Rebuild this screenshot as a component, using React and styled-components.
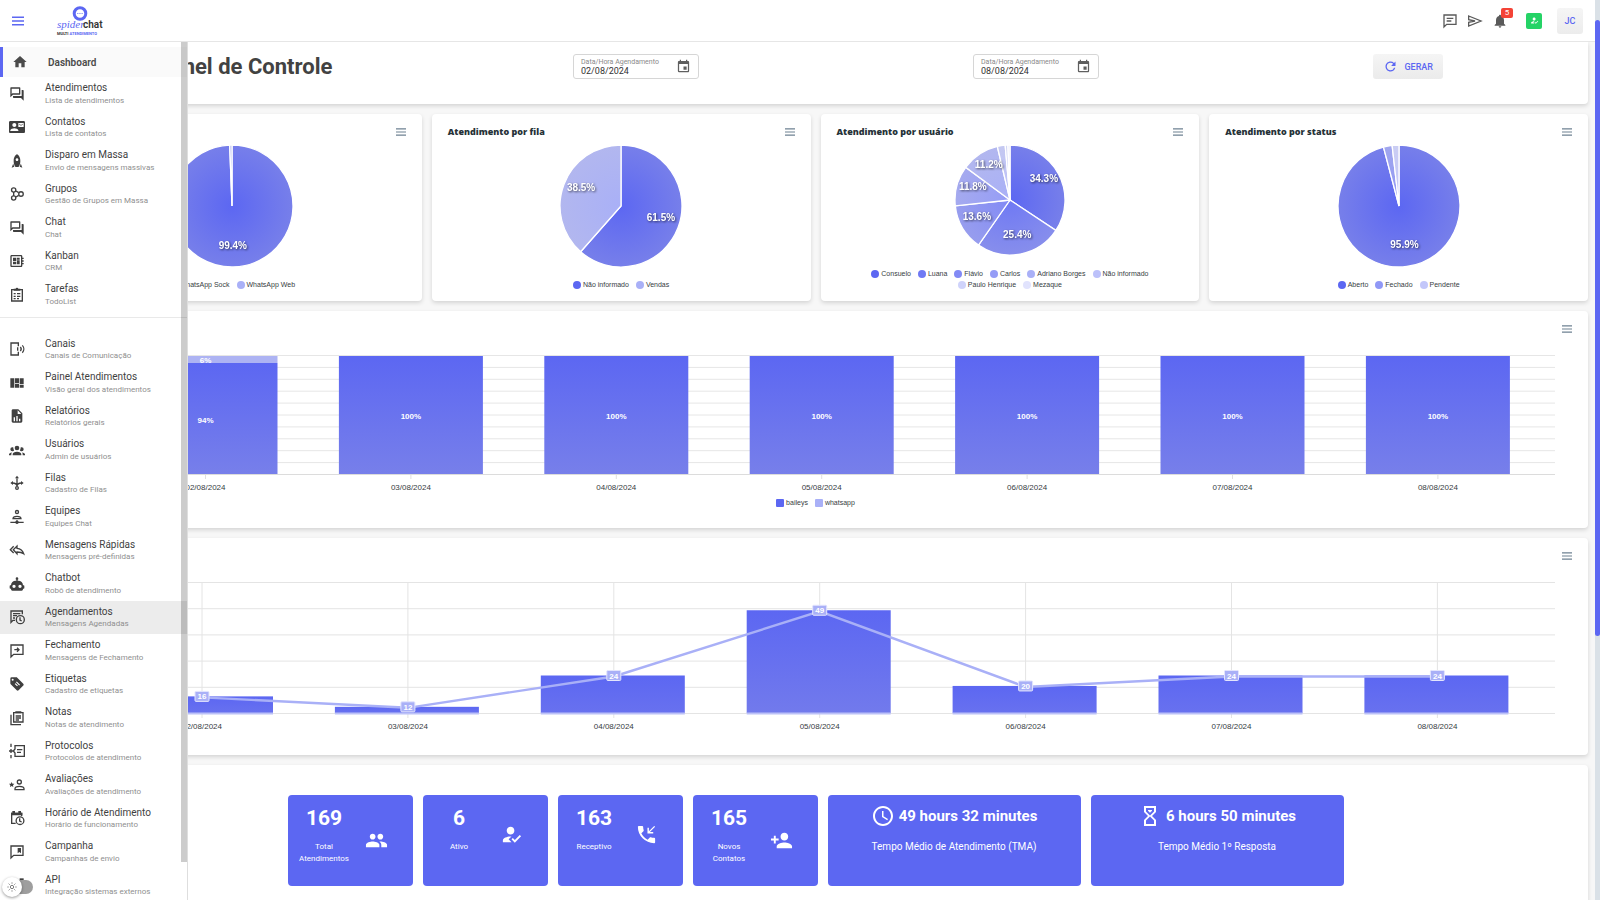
import React from 'react';
import styled, { createGlobalStyle } from 'styled-components';
import {
    MdContactMail,
    MdDeveloperBoard,
    MdEvent,
    MdGroup,
    MdHowToReg,
    MdNotifications,
    MdPersonAdd,
    MdRefresh,
    MdSchedule
} from 'react-icons/md';

const PRIMARY = '#5c67f2';
const ARIAL = '"Liberation Sans", Arial, sans-serif';

const GlobalStyle = createGlobalStyle`
    * {
        box-sizing: border-box;
    }
    body {
        margin: 0;
        background: #f7f7f7;
        color: #424242;
        font-family: Roboto, sans-serif;
        overflow: hidden;
    }
    button, input {
        font-family: inherit;
    }
`
const Page = styled.div`
    display: flex;
    height: 100vh;
`
const Column = styled.div`
    flex: 1;
    min-width: 0;
    display: flex;
    flex-direction: column;
`
const PageTrack = styled.div`
    width: 5px;
    padding-top: 20px;
    background: #dae1e7;
`
const PageThumb = styled.div`
    height: 70%;
    border-radius: 3px;
    background: ${PRIMARY};
`

/* top bar */
const Header = styled.header`
    height: 42px;
    flex-shrink: 0;
    display: flex;
    align-items: center;
    padding: 0 12px;
    background: #fff;
    border-bottom: 1px solid #e6e6e6;
`
const IconButton = styled.button`
    display: flex;
    padding: 0;
    border: 0;
    background: none;
    color: #5a5a5a;
    cursor: pointer;
`
const Brand = styled.a`
    display: flex;
    margin-left: 32px;
`
const Actions = styled.div`
    margin-left: auto;
    display: flex;
    align-items: center;
`
const ActionGroup = styled.div`
    display: flex;
    gap: 9px;
    margin-right: 18px;
`
const BellButton = styled(IconButton)`
    position: relative;
`
const Badge = styled.span`
    position: absolute;
    top: -5px;
    left: 9px;
    width: 12px;
    border-radius: 2px;
    background: #f44336;
    color: #fff;
    font-size: 8px;
    line-height: 10px;
    text-align: center;
`
const StatusButton = styled.button`
    display: flex;
    align-items: center;
    justify-content: center;
    width: 16px;
    height: 16px;
    margin-right: 15px;
    padding: 0;
    border: 0;
    border-radius: 2px;
    background: #25d366;
    color: #fff;
`
const Avatar = styled.button`
    width: 26px;
    height: 26px;
    padding: 0;
    border: 0;
    border-radius: 3px;
    background: linear-gradient(#f5f5f5, #ececec);
    color: ${PRIMARY};
    font-size: 9px;
    font-weight: 500;
`

/* side menu */
const Body = styled.div`
    position: relative;
    flex: 1;
    min-height: 0;
    overflow: hidden;
`
const Sidebar = styled.aside`
    position: absolute;
    top: 0;
    bottom: 0;
    left: 0;
    width: 188px;
    padding-top: 5px;
    overflow: hidden;
    background: #fff;
    border-right: 1px solid #dedede;
`
const SidebarThumb = styled.div`
    position: absolute;
    top: 0;
    right: 0;
    width: 6px;
    height: 820px;
    background: rgba(0, 0, 0, 0.2);
`
const HomeItem = styled.a`
    display: flex;
    align-items: center;
    height: 30px;
    padding-left: 9px;
    gap: 20px;
    border-left: 3px solid ${PRIMARY};
    background: #fafafa;
    color: #4a4a4a;
    font-size: 10px;
    font-weight: 600;
    text-decoration: none;
`
const MenuGroup = styled.nav`
    & + & {
        margin-top: 5px;
        padding-top: 15px;
        border-top: 1px solid #e9e9e9;
    }
`
const MenuItem = styled.a`
    display: flex;
    align-items: center;
    gap: 20px;
    padding: 0 9px;
    background: ${({ $active }) => ($active ? '#ececec' : 'none')};
    color: #3f3f3f;
    text-decoration: none;
`
const MenuText = styled.span`
    padding: 3px 0 7px;
    white-space: nowrap;
`
const MenuLabel = styled.span`
    display: block;
    font-size: 10px;
    line-height: 1.65;
`
const MenuCaption = styled.span`
    display: block;
    color: #8f8f8f;
    font-size: 8px;
    line-height: 7px;
`
const ThemeSwitch = styled.label`
    position: absolute;
    left: 2px;
    bottom: 3px;
    display: flex;
    align-items: center;
    input {
        position: absolute;
        opacity: 0;
    }
`
const SwitchTrack = styled.span`
    width: 21px;
    height: 14px;
    margin-left: -10px;
    border-radius: 7px;
    background: #9e9e9e;
`
const SwitchThumb = styled.span`
    z-index: 1;
    display: flex;
    align-items: center;
    justify-content: center;
    width: 20px;
    height: 20px;
    border-radius: 50%;
    background: #fff;
    box-shadow: 0 1px 3px rgba(0, 0, 0, 0.4);
`

/* content */
const Main = styled.main`
    display: flex;
    flex-direction: column;
    gap: 10px;
    height: 100%;
    padding: 0 7px 0 43px;
`
const Card = styled.section`
    background: #fff;
    border-radius: 4px;
    box-shadow: 0 2px 4px rgba(0, 0, 0, 0.14);
`
const FilterCard = styled(Card)`
    display: grid;
    grid-template-columns: 422fr 400fr 400fr 70px;
    align-items: start;
    flex-shrink: 0;
    height: 62px;
    padding: 12px 145px 0 108px;
    border-radius: 0 0 4px 4px;
`
const Title = styled.h1`
    margin: 0;
    font-size: 22px;
    line-height: 25px;
    font-weight: 700;
    white-space: nowrap;
`
const Field = styled.div`
    display: flex;
    align-items: center;
    justify-content: space-between;
    width: 126px;
    height: 25px;
    padding: 0 7px;
    border: 1px solid #d6d6d6;
    border-radius: 3px;
    color: #5f5f5f;
`
const FieldLabel = styled.label`
    display: block;
    color: #8a8a8a;
    font-size: 7px;
    line-height: 8px;
    white-space: nowrap;
`
const FieldInput = styled.input`
    display: block;
    width: 80px;
    height: 10px;
    padding: 0;
    border: 0;
    outline: 0;
    background: none;
    color: #333;
    font-size: 9px;
`
const GenerateButton = styled.button`
    display: flex;
    align-items: center;
    justify-content: space-between;
    height: 25px;
    padding: 0 10px;
    border: 0;
    border-radius: 3px;
    background: linear-gradient(#f5f5f5, #ebebeb);
    color: ${PRIMARY};
    font-size: 9px;
    font-weight: 500;
`
const PieRow = styled.div`
    display: grid;
    grid-template-columns: repeat(4, 1fr);
    gap: 10px;
`
const PieCard = styled(Card)`
    display: flex;
    flex-direction: column;
    align-items: center;
    height: 187px;
    padding: 8px 16px 11px;
`
const CardHead = styled.div`
    display: flex;
    align-items: center;
    align-self: stretch;
    height: 19px;
    margin-bottom: 3px;
    ${IconButton} {
        margin-left: auto;
    }
`
const CardTitle = styled.h2`
    margin: 0;
    color: #263238;
    font-family: "Open Sans", sans-serif;
    font-size: 9px;
    font-weight: 800;
`
const Legend = styled.ul`
    display: flex;
    flex-wrap: wrap;
    justify-content: center;
    column-gap: 7px;
    margin: auto 0 0;
    padding: 0 24px;
    list-style: none;
`
const LegendItem = styled.li`
    display: flex;
    align-items: center;
    gap: 2px;
    color: #373d3f;
    font-family: ${ARIAL};
    font-size: 7px;
    line-height: 11px;
    white-space: nowrap;
    &::before {
        content: '';
        width: 8px;
        height: 8px;
        border-radius: ${({ $square }) => ($square ? '1px' : '50%')};
        background: ${({ $color }) => $color};
    }
`
const PieLabel = styled.text`
    fill: #fff;
    font: bold 10px ${ARIAL};
    text-anchor: middle;
    filter: drop-shadow(1px 1px 1px rgba(0, 0, 0, 0.6));
`
const ChartCard = styled(Card)`
    display: flex;
    flex-direction: column;
    flex-shrink: 0;
    height: 217px;
    padding: 8px 0 20px;
`
const ChartHead = styled(CardHead)`
    padding-right: 16px;
    margin: 0 0 13px;
`
const ChartSvg = styled.svg`
    display: block;
    width: 100%;
    height: ${({ $height }) => $height}px;
    font-family: ${ARIAL};
    text-anchor: middle;
`
const AxisText = styled.text`
    fill: #373d3f;
    font-size: 8px;
`
const BarText = styled.text`
    fill: #fff;
    font-size: 8px;
    font-weight: bold;
`
const StatsCard = styled(Card)`
    display: flex;
    align-items: flex-start;
    justify-content: center;
    gap: 10px;
    flex: 1;
    min-height: 160px;
    padding-top: 30px;
`
const Stat = styled.div`
    display: flex;
    align-items: flex-start;
    width: 125px;
    height: 91px;
    padding-top: 9px;
    border-radius: 4px;
    background: ${PRIMARY};
    color: #fff;
`
const StatRow = styled.div`
    display: flex;
    align-items: center;
    gap: 4px;
    width: 100%;
`
const StatText = styled.div`
    width: 73px;
    padding-bottom: 11px;
    text-align: center;
`
const StatValue = styled.div`
    margin-bottom: 9px;
    font-size: 21px;
    line-height: 28px;
    font-weight: 700;
`
const StatLabel = styled.div`
    padding: 0 10px;
    font-size: 8px;
    line-height: 12px;
`
const TimeStat = styled.div`
    width: 253px;
    height: 91px;
    padding-top: 9px;
    border-radius: 4px;
    background: ${PRIMARY};
    color: #fff;
    text-align: center;
`
const TimeValue = styled.div`
    display: flex;
    align-items: center;
    justify-content: center;
    gap: 4px;
    height: 24px;
    font-size: 15px;
    font-weight: 700;
`
const TimeLabel = styled.div`
    margin-top: 12px;
    font-size: 10px;
    line-height: 14px;
`

// filled 24x24 icons
const Glyph = ({ d, size = 16 }) => (
    <svg width={size} height={size} viewBox='0 0 24 24' fill='currentColor'>
        <path fillRule='evenodd' d={d} />
    </svg>
)
// line 24x24 icons
const Line = ({ d, size = 16, children }) => (
    <svg width={size} height={size} viewBox='0 0 24 24' fill='none' stroke='currentColor' strokeWidth='2'>
        <path d={d} />
        {children}
    </svg>
)
const Burger = ({ width = 10, color = '#6e8192' }) => (
    <svg width={width} height={width} viewBox='0 0 12 12' stroke={color} strokeWidth='1.4'>
        <path d='M0 2.2H12M0 6H12M0 9.8H12' />
    </svg>
)
const IncomingCall = ({ size }) => (
    <Glyph size={size} d='M4,3A1,1 0 0,0 3,4A17,17 0 0,0 20,21A1,1 0 0,0 21,20V16.5A1,1 0 0,0 20,15.5C18.75,15.5 17.55,15.3 16.43,14.93C16.08,14.82 15.69,14.9 15.41,15.18L13.21,17.38C10.38,15.94 8.06,13.62 6.62,10.79L8.82,8.59C9.1,8.31 9.18,7.92 9.07,7.57C8.7,6.45 8.5,5.25 8.5,4A1,1 0 0,0 7.5,3H4M19,11V9.5H15.5L21,4L20,3L14.5,8.5V5H13V11H19Z' />
)

const BUBBLE = 'M3 21V3H21V17H7Z'
const icons = {
    home: <Glyph d='M10,20V14H14V20H19V12H22L12,3L2,12H5V20H10Z' />,
    forum: <Glyph d='M15,4V11H5.17L4,12.17V4H15M16,2H3A1,1 0 0,0 2,3V17L6,13H16A1,1 0 0,0 17,12V3A1,1 0 0,0 16,2M21,6H19V15H6V17A1,1 0 0,0 7,18H18L22,22V7A1,1 0 0,0 21,6Z' />,
    contact: <MdContactMail size={16} />,
    rocket: <Glyph d='M20,22L16.14,20.45C16.84,18.92 17.34,17.34 17.65,15.73L20,22M7.86,20.45L4,22L6.35,15.73C6.66,17.34 7.16,18.92 7.86,20.45M12,2C12,2 17,4 17,12C17,15.1 16.25,17.75 15.33,19.83C15,20.55 14.29,21 13.5,21H10.5C9.71,21 9,20.55 8.67,19.83C7.75,17.75 7,15.1 7,12C7,4 12,2 12,2M12,12C13.1,12 14,11.1 14,10C14,8.9 13.1,8 12,8C10.9,8 10,8.9 10,10C10,11.1 10.9,12 12,12Z' />,
    groups: (
        <Line d='M7 9V15M10.500 7.500L14.500 10M10.500 16.500L14.500 14'>
            <circle cx='7' cy='6' r='3.200' />
            <circle cx='7' cy='18' r='3.200' />
            <circle cx='18' cy='12' r='3.400' />
        </Line>
    ),
    board: <MdDeveloperBoard size={16} />,
    todo: (
        <Line d='M4 4H20V21H4ZM7 10H10M12 10H17M7 14H10M12 14H17M7 17.500H10M12 17.500H15'>
            <path d='M8.500 5.500V4H15.500V5.500' strokeWidth='3' />
            <circle cx='12' cy='3' r='1' />
        </Line>
    ),
    phone: <Line d='M14 8V3H3V21H14V16M13 9.500V14.500M17 9A4.500 4.500 0 0 1 17 15M20 6.500A8 8 0 0 1 20 17.500' />,
    panel: <Glyph d='M2,5H8V19H2ZM9,5H15V12H9ZM9,13H15V19H9ZM16,5H22V14H16ZM16,15H22V19H16Z' />,
    report: <Glyph d='M13,9H18.5L13,3.5V9M6,2H14L20,8V20A2,2 0 0,1 18,22H6C4.89,22 4,21.1 4,20V4C4,2.89 4.89,2 6,2M7,20H9V14H7V20M11,20H13V12H11V20M15,20H17V16H15V20Z' />,
    users: <Glyph d='M12,5.5A3.5,3.5 0 0,1 15.5,9A3.5,3.5 0 0,1 12,12.5A3.5,3.5 0 0,1 8.5,9A3.5,3.5 0 0,1 12,5.5M5,8C5.56,8 6.08,8.15 6.53,8.42C6.38,9.85 6.8,11.27 7.66,12.38C7.16,13.34 6.16,14 5,14A3,3 0 0,1 2,11A3,3 0 0,1 5,8M19,8A3,3 0 0,1 22,11A3,3 0 0,1 19,14C17.84,14 16.84,13.34 16.34,12.38C17.2,11.27 17.62,9.85 17.47,8.42C17.92,8.15 18.44,8 19,8M5.5,18.25C5.5,16.18 8.41,14.5 12,14.5C15.59,14.5 18.5,16.18 18.5,18.25V20H5.5V18.25M0,20V18.5C0,17.11 1.89,15.94 4.45,15.6C3.86,16.28 3.5,17.22 3.5,18.25V20H0M24,20H20.5V18.25C20.5,17.22 20.14,16.28 19.55,15.6C22.11,15.94 24,17.11 24,18.5V20Z' />,
    queues: (
        <Line d='M12 17V5M12 17C12 14 9 12 5 12M12 17C12 14 15 12 19 12'>
            <path d='M12 1L15 5H9ZM2 12L6 9V15ZM22 12L18 9V15Z' fill='currentColor' stroke='none' />
            <circle cx='12' cy='19.500' r='2' />
        </Line>
    ),
    team: (
        <Line d='M2 20H22M12 17V20'>
            <circle cx='12' cy='4.500' r='2.300' />
            <path d='M6 14.500C6 12 9 11 12 11S18 12 18 14.500Z' />
            <circle cx='12' cy='20' r='1.600' fill='currentColor' />
        </Line>
    ),
    reply: <Line d='M7 6.500L2 11.500L7 16.500M12 15V17.500L6.500 11.500L12 6V9.500C17 10 20.500 12.500 22 17.500C19.500 15.500 17 15 12 15Z' />,
    robot: <Glyph d='M12,2A2,2 0 0,1 14,4C14,4.74 13.6,5.39 13,5.73V7H14A7,7 0 0,1 21,14H22A1,1 0 0,1 23,15V18A1,1 0 0,1 22,19H21V20A2,2 0 0,1 19,22H5A2,2 0 0,1 3,20V19H2A1,1 0 0,1 1,18V15A1,1 0 0,1 2,14H3A7,7 0 0,1 10,7H11V5.73C10.4,5.39 10,4.74 10,4A2,2 0 0,1 12,2M7.5,13A2.5,2.5 0 0,0 5,15.5A2.5,2.5 0 0,0 7.5,18A2.5,2.5 0 0,0 10,15.5A2.5,2.5 0 0,0 7.5,13M16.5,13A2.5,2.5 0 0,0 14,15.5A2.5,2.5 0 0,0 16.5,18A2.5,2.5 0 0,0 19,15.5A2.5,2.5 0 0,0 16.5,13Z' />,
    schedule: (
        <Line d='M20 8V3H3V20L6 17H9M6 7H17M6 10H12M6 13.500H9'>
            <circle cx='17' cy='16' r='6' />
            <path d='M16.500 12.500V16.500L19 18' />
        </Line>
    ),
    closing: <Line d={`${BUBBLE}M8 10H15M12 7L15 10L12 13`} />,
    tag: <Glyph d='M5.500,7A1.500,1.500 0 1,0 5.500,4A1.500,1.500 0 1,0 5.500,7M21.400,11.600L12.400,2.600C12,2.200 11.500,2 11,2H4A2,2 0 0,0 2,4V11C2,11.500 2.200,12 2.600,12.400L11.600,21.400C12.400,22.200 13.600,22.200 14.400,21.400L21.400,14.400C22.200,13.600 22.200,12.400 21.400,11.600M10.500,9.500L11.700,8.300L16.500,13.100L15.300,14.300ZM8.600,12L9.800,10.800L13.300,14.300L12.100,15.500Z' />,
    notes: (
        <Line d='M3 7V22H18M7 4H21V18H7ZM10 9H18M10 12H18M10 15H15'>
            <path d='M11 5V3.500H17V5' strokeWidth='3' />
        </Line>
    ),
    protocols: <Line d='M3 1V6M3 9V15M3 18V23M0 12H6M9 4H23V20H9V15L6.500 12L9 9ZM12 10H20M12 14H18' />,
    rating: (
        <Line d='M9 19V17.500C9 15 12 14 15.500 14S22.500 15 22.500 17.500V19Z'>
            <circle cx='15.500' cy='7.500' r='3' />
            <path d='M4 7.500L5.200 10L8 10.300L6 12.200L6.500 15L4 13.600L1.500 15L2 12.200L0 10.300L2.800 10Z' fill='currentColor' stroke='none' />
        </Line>
    ),
    hours: (
        <Line d='M10 20H4V5H19V9'>
            <path d='M3 6H20M7 1.500V5M16 1.500V5' strokeWidth='4' />
            <circle cx='16.500' cy='16' r='5.800' />
            <path d='M16 12.500V16.500L19 18' />
        </Line>
    ),
    campaign: (
        <Line d={BUBBLE}>
            <path d='M13 6H18V14L15.500 12L13 14Z' fill='currentColor' stroke='none' />
        </Line>
    ),
    api: <Glyph d='M16,2H22V8H16Z' />
}

const mainMenu = [
    ['forum', 'Atendimentos', 'Lista de atendimentos'],
    ['contact', 'Contatos', 'Lista de contatos'],
    ['rocket', 'Disparo em Massa', 'Envio de mensagens massivas'],
    ['groups', 'Grupos', 'Gestão de Grupos em Massa'],
    ['forum', 'Chat', 'Chat'],
    ['board', 'Kanban', 'CRM'],
    ['todo', 'Tarefas', 'TodoList']
]
const adminMenu = [
    ['phone', 'Canais', 'Canais de Comunicação'],
    ['panel', 'Painel Atendimentos', 'Visão geral dos atendimentos'],
    ['report', 'Relatórios', 'Relatórios gerais'],
    ['users', 'Usuários', 'Admin de usuários'],
    ['queues', 'Filas', 'Cadastro de Filas'],
    ['team', 'Equipes', 'Equipes Chat'],
    ['reply', 'Mensagens Rápidas', 'Mensagens pré-definidas'],
    ['robot', 'Chatbot', 'Robô de atendimento'],
    ['schedule', 'Agendamentos', 'Mensagens Agendadas'],
    ['closing', 'Fechamento', 'Mensagens de Fechamento'],
    ['tag', 'Etiquetas', 'Cadastro de etiquetas'],
    ['notes', 'Notas', 'Notas de atendimento'],
    ['protocols', 'Protocolos', 'Protocolos de atendimento'],
    ['rating', 'Avaliações', 'Avaliações de atendimento'],
    ['hours', 'Horário de Atendimento', 'Horário de funcionamento'],
    ['campaign', 'Campanha', 'Campanhas de envio'],
    ['api', 'API', 'Integração sistemas externos']
]

// name, percent, colour, colour at the rim
const pies = [
    {
        id: 'canal',
        radius: 61,
        data: [
            ['WhatsApp Sock', 99.4, '#5c67f2', '#777fea'],
            ['WhatsApp Web', 0.6, '#a9b0f7', '#b2b7ef']
        ]
    },
    {
        id: 'fila',
        title: 'Atendimento por fila',
        radius: 61,
        data: [
            ['Não informado', 61.5, '#5c67f2', '#777fea'],
            ['Vendas', 38.5, '#a9b0f7', '#b2b7ef']
        ]
    },
    {
        id: 'usuario',
        title: 'Atendimento por usuário',
        radius: 55,
        data: [
            ['Consuelo', 34.3, '#5c67f2', '#777fea'],
            ['Luana', 25.4, '#6f79f4', '#878eec'],
            ['Flávio', 13.6, '#828af5', '#979dee'],
            ['Carlos', 11.8, '#959cf6', '#a5aaef'],
            ['Adriano Borges', 11.2, '#a9b0f7', '#b2b7ef'],
            ['Não informado', 2.3, '#bcc1fa', '#c4c8f1'],
            ['Paulo Henrique', 0.8, '#cfd3fb', '#d3d6f5'],
            ['Mezaque', 0.6, '#e1e3fd', '#e4e6f9']
        ]
    },
    {
        id: 'status',
        title: 'Atendimento por status',
        radius: 61,
        data: [
            ['Aberto', 95.9, '#5c67f2', '#777fea'],
            ['Fechado', 2.3, '#9098f6', '#a0a6ee'],
            ['Pendente', 1.8, '#c3c7fa', '#cacdf3']
        ]
    }
]

const days = ['02/08/2024', '03/08/2024', '04/08/2024', '05/08/2024', '06/08/2024', '07/08/2024', '08/08/2024']
const totals = [16, 12, 24, 49, 20, 24, 24]

function Menu({ items }) {
    return (
        <MenuGroup>
            {items.map(([icon, label, caption]) => (
                <MenuItem key={label} href='#' $active={label === 'Agendamentos'}>
                    {icons[icon]}
                    <MenuText>
                        <MenuLabel>{label}</MenuLabel>
                        <MenuCaption>{caption}</MenuCaption>
                    </MenuText>
                </MenuItem>
            ))}
        </MenuGroup>
    )
}

function Pie({ id, radius, data }) {
    const half = radius + 1
    const point = (percent, r) => {
        const angle = (percent / 100) * Math.PI * 2
        return [Math.sin(angle) * r, -Math.cos(angle) * r]
    }
    let start = 0
    const slices = data.map(([name, value, color, rim], idx) => {
        const from = start
        start += value
        return { name, value, color, rim, idx, from, to: start }
    })
    return (
        <svg width={half * 2} height={half * 2} viewBox={`${-half} ${-half} ${half * 2} ${half * 2}`}>
            <defs>
                {slices.map(({ color, rim, idx }) => (
                    <radialGradient key={idx} id={`${id}${idx}`} gradientUnits='userSpaceOnUse' cx='0' cy='0' r={radius}>
                        <stop offset='0' stopColor={color} />
                        <stop offset='1' stopColor={rim} />
                    </radialGradient>
                ))}
            </defs>
            {slices.map(({ value, idx, from, to }) => (
                <path
                    key={idx}
                    d={`M0 0L${point(from, radius)}A${radius} ${radius} 0 ${value > 50 ? 1 : 0} 1 ${point(to, radius)}Z`}
                    fill={`url(#${id}${idx})`}
                    stroke='#fff'
                    strokeWidth='1.300'
                />
            ))}
            {slices.filter(({ value }) => value > 5).map(({ value, idx, from, to }) => {
                const [x, y] = point((from + to) / 2, radius * 0.7)
                return <PieLabel key={idx} x={x} y={y}>{value}%</PieLabel>
            })}
        </svg>
    )
}

function StackedChart() {
    const center = idx => 162.5 + idx * 205.4
    return (
        <ChartSvg viewBox='0 0 1545 146' $height={146}>
            <defs>
                <linearGradient id='stack' x1='0' y1='0' x2='0' y2='1'>
                    <stop offset='0' stopColor='#5c67f2' />
                    <stop offset='1' stopColor='#777fea' />
                </linearGradient>
            </defs>
            {Array.from({ length: 11 }, (_, idx) => (
                <path key={idx} d={`M46 ${4.5 + idx * 11.9}H1512`} stroke={idx === 10 ? '#dcdcdc' : '#e6e6e6'} strokeWidth='1' />
            ))}
            {days.map((day, idx) => {
                const x = center(idx)
                const top = idx === 0 ? 12 : 5
                return (
                    <g key={day}>
                        <path d={`M${x} 124V128`} stroke='#e0e0e0' />
                        {idx === 0 && <rect x={x - 72} y='5' width='144' height='7' fill='#adb3f3' />}
                        <rect x={x - 72} y={top} width='144' height={123 - top} fill='url(#stack)' />
                        {idx === 0 && <BarText x={x} y='12'>6%</BarText>}
                        <BarText x={x} y={idx === 0 ? 72 : 68}>{idx === 0 ? '94%' : '100%'}</BarText>
                        <AxisText x={x} y='139'>{day}</AxisText>
                    </g>
                )
            })}
        </ChartSvg>
    )
}

function TotalsChart() {
    const center = idx => 159 + idx * 205.9
    const top = value => 97.5 - (value - 24) * 2.61
    return (
        <ChartSvg viewBox='0 0 1545 154' $height={154}>
            <defs>
                <linearGradient id='totals' gradientUnits='userSpaceOnUse' x1='0' y1='32' x2='0' y2='136'>
                    <stop offset='0' stopColor='#5c67f2' />
                    <stop offset='1' stopColor='#727aec' />
                </linearGradient>
                <linearGradient id='totalsLow' x1='0' y1='0' x2='0' y2='1'>
                    <stop offset='0' stopColor='#5c67f2' />
                    <stop offset='1' stopColor='#6871ef' />
                </linearGradient>
            </defs>
            {[0, 1, 2, 3, 4, 5].map(idx => (
                <path key={idx} d={`M46 ${4.5 + idx * 26.2}H1512`} stroke='#e4e4e4' />
            ))}
            {days.map((day, idx) => (
                <g key={day}>
                    <path d={`M${center(idx)} 5V140`} stroke='#e4e4e4' />
                    <rect
                        x={center(idx) - 73}
                        y={top(totals[idx])}
                        width='144'
                        height={135 - top(totals[idx])}
                        fill={totals[idx] > 40 ? 'url(#totals)' : 'url(#totalsLow)'}
                    />
                    <path d={`M${center(idx) - 73} 135.500H${center(idx) + 71}`} stroke='#bcc1f7' strokeWidth='2' />
                    <AxisText x={center(idx)} y='151'>{day}</AxisText>
                </g>
            ))}
            <polyline
                points={totals.map((value, idx) => `${center(idx)},${top(value) + 1}`).join(' ')}
                fill='none'
                stroke='#a9b0f7'
                strokeWidth='2.400'
            />
            {totals.map((value, idx) => (
                <g key={idx}>
                    <rect x={center(idx) - 7} y={top(value) - 5} width='14' height='10' rx='1' fill='#a9b0f7' stroke='#e3e5fd' />
                    <BarText x={center(idx)} y={top(value) + 3}>{value}</BarText>
                </g>
            ))}
        </ChartSvg>
    )
}

function DateField({ id, value }) {
    return (
        <Field>
            <div>
                <FieldLabel htmlFor={id}>Data/Hora Agendamento</FieldLabel>
                <FieldInput id={id} defaultValue={value} />
            </div>
            <MdEvent size={15} />
        </Field>
    )
}

function Logo() {
    return (
        <svg width='48' height='32' viewBox='0 0 48 32'>
            <circle cx='24' cy='8.500' r='5.800' fill='none' stroke={PRIMARY} strokeWidth='3' />
            <path d='M21 8.500H27' stroke='#9aa1f7' strokeWidth='1' strokeDasharray='1.500 .7' />
            <text x='1' y='23' fill={PRIMARY} fontFamily='Liberation Serif, serif' fontStyle='italic' fontSize='11'>spider</text>
            <text x='27' y='23' fill='#333' fontFamily='Roboto, sans-serif' fontWeight='600' fontSize='10'>chat</text>
            <text x='1' y='30' fill='#333' fontFamily='Roboto, sans-serif' fontWeight='700' fontSize='4'>
                MULTI <tspan fill={PRIMARY}>ATENDIMENTO</tspan>
            </text>
        </svg>
    )
}

function StatBox({ value, label, icon: IconComponent }) {
    return (
        <Stat>
            <StatRow>
                <StatText>
                    <StatValue>{value}</StatValue>
                    <StatLabel>{label}</StatLabel>
                </StatText>
                <IconComponent size={23} />
            </StatRow>
        </Stat>
    )
}

function App() {
    return (
        <Page>
            <GlobalStyle />
            <Column>
                <Header>
                    <IconButton aria-label='Menu'>
                        <Burger width={12} color={PRIMARY} />
                    </IconButton>
                    <Brand href='#' aria-label='spiderchat'>
                        <Logo />
                    </Brand>
                    <Actions>
                        <ActionGroup>
                            <IconButton aria-label='Mensagens'>
                                <Line d={`${BUBBLE}M7 8H17M7 12H14`} />
                            </IconButton>
                            <IconButton aria-label='Enviar'>
                                <Line d='M2.500 4.500L21 12L2.500 19.500V14L12 12L2.500 10Z' />
                            </IconButton>
                            <BellButton aria-label='Notificações'>
                                <MdNotifications size={16} />
                                <Badge>5</Badge>
                            </BellButton>
                        </ActionGroup>
                        <StatusButton aria-label='Status'>
                            <MdHowToReg size={9} />
                        </StatusButton>
                        <Avatar>JC</Avatar>
                    </Actions>
                </Header>
                <Body>
                    <Main>
                        <FilterCard>
                            <Title>Painel de Controle</Title>
                            <DateField id='start' value='02/08/2024' />
                            <DateField id='end' value='08/08/2024' />
                            <GenerateButton>
                                <MdRefresh size={15} />
                                GERAR
                            </GenerateButton>
                        </FilterCard>
                        <PieRow>
                            {pies.map(pie => (
                                <PieCard key={pie.id}>
                                    <CardHead>
                                        {pie.title && <CardTitle>{pie.title}</CardTitle>}
                                        <IconButton aria-label='Opções'><Burger /></IconButton>
                                    </CardHead>
                                    <Pie {...pie} />
                                    <Legend>
                                        {pie.data.map(([name, , color]) => (
                                            <LegendItem key={name} $color={color}>{name}</LegendItem>
                                        ))}
                                    </Legend>
                                </PieCard>
                            ))}
                        </PieRow>
                        <ChartCard>
                            <ChartHead>
                                <IconButton aria-label='Opções'><Burger /></IconButton>
                            </ChartHead>
                            <StackedChart />
                            <Legend>
                                <LegendItem $square $color='#5c67f2'>baileys</LegendItem>
                                <LegendItem $square $color='#a9b0f7'>whatsapp</LegendItem>
                            </Legend>
                        </ChartCard>
                        <ChartCard>
                            <ChartHead>
                                <IconButton aria-label='Opções'><Burger /></IconButton>
                            </ChartHead>
                            <TotalsChart />
                        </ChartCard>
                        <StatsCard>
                            <StatBox value='169' label='Total Atendimentos' icon={MdGroup} />
                            <StatBox value='6' label='Ativo' icon={MdHowToReg} />
                            <StatBox value='163' label='Receptivo' icon={IncomingCall} />
                            <StatBox value='165' label='Novos Contatos' icon={MdPersonAdd} />
                            <TimeStat>
                                <TimeValue><MdSchedule size={24} />49 hours 32 minutes</TimeValue>
                                <TimeLabel>Tempo Médio de Atendimento (TMA)</TimeLabel>
                            </TimeStat>
                            <TimeStat>
                                <TimeValue>
                                    <Glyph size={24} d='M6,2H18V8L14,12L18,16V22H6V16L10,12L6,8V2M16,16.5L12,12.5L8,16.5V20H16V16.5M12,11.5L16,7.5V4H8V7.5L12,11.5M10,6H14V6.75L12,8.75L10,6.75V6Z' />
                                    6 hours 50 minutes
                                </TimeValue>
                                <TimeLabel>Tempo Médio 1º Resposta</TimeLabel>
                            </TimeStat>
                        </StatsCard>
                    </Main>
                    <Sidebar>
                        <HomeItem href='#'>
                            {icons.home}
                            Dashboard
                        </HomeItem>
                        <Menu items={mainMenu} />
                        <Menu items={adminMenu} />
                        <SidebarThumb />
                        <ThemeSwitch>
                            <input type='checkbox' aria-label='Tema escuro' />
                            <SwitchThumb>
                                <svg width='10' height='10' viewBox='0 0 24 24' fill='none' stroke='#666' strokeWidth='2'>
                                    <circle cx='12' cy='12' r='4' />
                                    <path d='M12 1V4M12 20V23M1 12H4M20 12H23M4 4L6.500 6.500M17.500 17.500L20 20M4 20L6.500 17.500M17.500 6.500L20 4' />
                                </svg>
                            </SwitchThumb>
                            <SwitchTrack />
                        </ThemeSwitch>
                    </Sidebar>
                </Body>
            </Column>
            <PageTrack>
                <PageThumb />
            </PageTrack>
        </Page>
    )
}

export default App;
